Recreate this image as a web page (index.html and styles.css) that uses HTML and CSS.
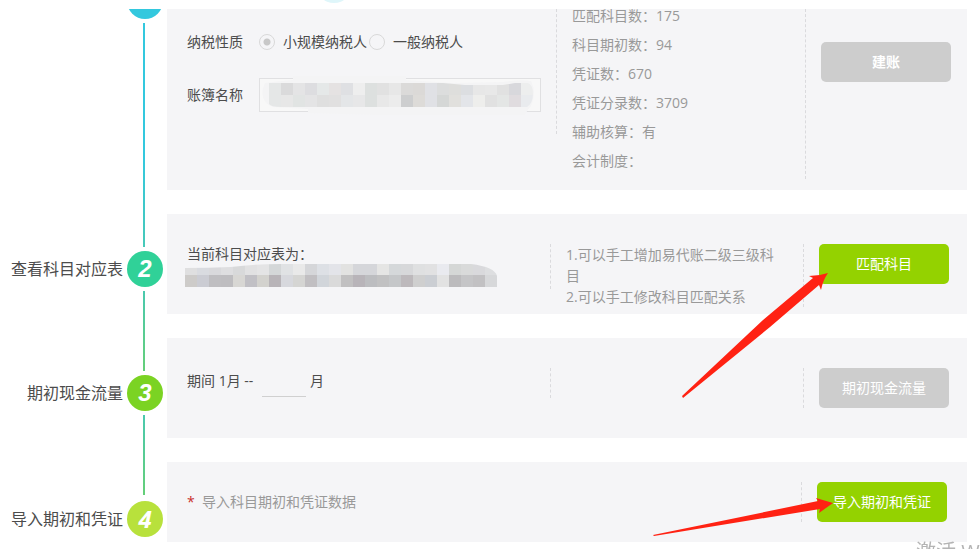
FILE: index.html
```
<!DOCTYPE html>
<html lang="zh-CN">
<head>
    <meta charset="UTF-8">
    <meta name="viewport" content="width=device-width, initial-scale=1.0">
    <title>导入期初和凭证</title>
    <link rel="stylesheet" href="styles.css">
</head>
<body>
    <header class="top-bar"><span class="top-dot"></span></header>

    <main class="wizard">
        <ol class="timeline">
            <li class="step step-1"><span class="badge"></span></li>
            <li class="line line-long"></li>
            <li class="step step-2">查看科目对应表<span class="badge">2</span></li>
            <li class="line"></li>
            <li class="step step-3">期初现金流量<span class="badge">3</span></li>
            <li class="line"></li>
            <li class="step step-4">导入期初和凭证<span class="badge">4</span></li>
        </ol>

        <div class="panels">
            <section class="panel panel-create">
                <form class="main">
                    <div class="form-row">
                        <span class="form-label">纳税性质</span>
                        <input type="radio" name="tax" id="tax-small" checked>
                        <label for="tax-small">小规模纳税人</label>
                        <input type="radio" name="tax" id="tax-normal">
                        <label for="tax-normal">一般纳税人</label>
                    </div>
                    <div class="form-row">
                        <label class="form-label" for="book-name">账簿名称</label>
                        <div class="book-field">
                            <input type="text" id="book-name">
                            <svg class="mask" width="282" height="40" viewBox="0 0 282 40">
                                <path d="M6 7Q20 5 34 4V0H147V4L192 7L244 6Q260 3 272 5Q278 16 272 30Q268 34 266 39L120 39L49 37V33L14 31Q1 26 4 12Z" fill="#f4f4f5"/>
                                <clipPath id="book-clip"><path d="M10 7H184L206 9H244L256 7H269Q274 9 274 18T268 31H22Q12 31 10 28Z"/></clipPath>
                                <g id="book-cells" clip-path="url(#book-clip)"></g>
                            </svg>
                        </div>
                    </div>
                </form>
                <div class="info">
                    <ul class="stats">
                        <li>匹配科目数：175</li>
                        <li>科目期初数：94</li>
                        <li>凭证数：670</li>
                        <li>凭证分录数：3709</li>
                        <li>辅助核算：有</li>
                        <li>会计制度：</li>
                    </ul>
                </div>
                <div class="action"><button type="button" class="btn btn-gray btn-bold">建账</button></div>
            </section>

            <section class="panel panel-match">
                <div class="main">
                    <div class="table-name">当前科目对应表为：
                        <svg class="mask" width="312" height="23" viewBox="0 0 312 23">
                            <clipPath id="table-clip"><path d="M0 4Q24 4 46 3Q70 0 96 0H286Q310 3 312 12V23H0Z"/></clipPath>
                            <g id="table-cells" clip-path="url(#table-clip)"></g>
                        </svg>
                    </div>
                </div>
                <div class="info">
                    <p>1.可以手工增加易代账二级三级科目</p>
                    <p>2.可以手工修改科目匹配关系</p>
                </div>
                <div class="action"><button type="button" class="btn btn-green">匹配科目</button></div>
                <svg class="arrow arrow-match" width="146" height="126" viewBox="0 0 146 126">
                    <path d="M0 123L81 47L131 5L127 3Q137 3 146 0Q141 7 139 17L137 12L88 54L1 125Z" fill="#ff2213"/>
                </svg>
            </section>

            <section class="panel panel-cash">
                <div class="main period">
                    <label for="month">期间 1月 --</label>
                    <input type="text" id="month">
                    <span>月</span>
                </div>
                <div class="info"></div>
                <div class="action"><button type="button" class="btn btn-gray">期初现金流量</button></div>
            </section>

            <section class="panel panel-import">
                <p class="note"><span class="star">*</span>导入科目期初和凭证数据</p>
                <div class="action"><button type="button" class="btn btn-green">导入期初和凭证</button></div>
                <svg class="arrow arrow-import" width="180" height="40" viewBox="0 0 180 40">
                    <path d="M0 37L165 3L163 0L180 5L166 15L167 11L1 38Z" fill="#ff2213"/>
                </svg>
            </section>
        </div>
    </main>

    <div class="watermark">激活 Windows</div>

    <script src="script.js"></script>
</body>
</html>
```
FILE: styles.css
```
* {
    box-sizing: border-box;
}
body {
    margin: 0;
    height: 100vh;
    overflow: hidden;
    background: #fff;
    color: #4c4c4c;
    font: 14px/20px "Open Sans", "Noto Sans CJK SC", sans-serif;
}
ol, ul, p {
    margin: 0;
    padding: 0;
    list-style: none;
}
input, button {
    font: inherit;
}
.top-bar {
    height: 9px;
    overflow: hidden;
}
.top-dot {
    display: block;
    width: 36px;
    height: 36px;
    margin: -33px 0 0 316px;
    border-radius: 50%;
    background: #dff6fa;
}
.wizard {
    display: flex;
    gap: 4px;
    padding-right: 13px;
}

/* timeline */
.timeline {
    width: 163px;
    flex: none;
}
.step {
    display: flex;
    align-items: center;
    justify-content: flex-end;
    gap: 4px;
    height: 36px;
    font-size: 16px;
}
.step-1 {
    height: 10px;
    align-items: flex-end;
    overflow: hidden;
}
.badge {
    flex: none;
    width: 36px;
    height: 36px;
    border-radius: 50%;
    color: #fff;
    font: italic bold 24px/36px "Liberation Sans", Arial, sans-serif;
    text-align: center;
}
.step-1 .badge { background: #33c8de; }
.step-2 .badge { background: #30d198; }
.step-3 .badge { background: #7bd323; }
.step-4 .badge {
    background: #b8e13c;
    font-family: "Open Sans", sans-serif;
}
.line {
    width: 2px;
    height: 80px;
    margin: 4px 18px 4px auto;
    background: linear-gradient(#4ac9ae, #65cf78);
}
.line-long {
    height: 224px;
    background: linear-gradient(#33c8de 60%, #47c9b8);
}
.line:nth-last-child(2) {
    margin-bottom: 6px;
}

/* panels */
.panels {
    flex: 1;
    display: flex;
    flex-direction: column;
    gap: 24px;
}
.panel {
    position: relative;
    display: flex;
    align-items: flex-start;
    min-height: 100px;
    padding: 30px 18px 0 20px;
    background: #f5f5f7;
}
.main {
    flex: 1;
    min-height: 30px;
    border-right: 1px dashed #dadadd;
}
.info {
    width: 253px;
    min-height: 40px;
    padding: 0 20px 0 15px;
    border-right: 1px dashed #dadadd;
    color: #999;
    line-height: 21px;
}
.action {
    padding-left: 15px;
}
.btn {
    display: block;
    width: 130px;
    height: 40px;
    padding: 0;
    border: none;
    border-radius: 5px;
    color: #fff;
    cursor: pointer;
}
.btn-green { background: #94d200; }
.btn-gray { background: #cdcdcd; }
.btn-bold { font-weight: bold; }

/* create account book */
.panel-create {
    min-height: 181px;
    padding: 0 16px 0 20px;
    overflow: hidden;
}
.panel-create .main {
    padding: 17px 0 22px;
}
.panel-create .info {
    width: 249px;
    height: 170px;
}
.panel-create .action {
    padding-top: 33px;
}
.stats {
    margin-top: -8px;
    line-height: 29px;
}
.form-row {
    display: flex;
    align-items: center;
    height: 32px;
}
.form-row + .form-row {
    height: 34px;
    margin-top: 20px;
}
.form-label {
    width: 72px;
}
input[type="radio"] {
    appearance: none;
    width: 16px;
    height: 16px;
    margin: 0 8px 0 0;
    border: 1px solid #d9d9d9;
    border-radius: 50%;
}
input[type="radio"]:checked {
    background: radial-gradient(circle, #c8c8c8 3px, transparent 4px);
}
label + input[type="radio"] {
    margin-left: 2px;
}
.book-field {
    position: relative;
}
#book-name {
    display: block;
    width: 282px;
    height: 34px;
    border: 1px solid #e0e0e2;
    background: #f8f8f8;
}
.mask {
    position: absolute;
    left: 0;
    top: -2px;
}

/* subject table */
.panel-match .main {
    height: 45px;
}
.table-name {
    position: relative;
}
.table-name .mask {
    left: -2px;
    top: 20px;
}

/* cash flow period */
.period {
    display: flex;
    gap: 4px;
    line-height: 26px;
}
.period label {
    width: 71px;
}
#month {
    width: 44px;
    height: 29px;
    padding: 0;
    border: none;
    border-bottom: 1px solid #d0d0d0;
    background: none;
}

/* import */
.panel-import {
    min-height: 80px;
    padding: 20px;
}
.note {
    flex: 1;
    border-right: 1px dashed #dadadd;
    color: #999;
    line-height: 40px;
}
.star {
    display: inline-block;
    width: 15px;
    color: #c9302c;
}

.arrow {
    position: absolute;
    z-index: 1;
}
.arrow-match {
    right: 139px;
    top: 59px;
}
.arrow-import {
    right: 134px;
    top: 36px;
}
.watermark {
    position: fixed;
    left: calc(100% - 64px);
    bottom: -17px;
    color: #b4b4b4;
    font-size: 20px;
    line-height: 28px;
    white-space: nowrap;
}
```
FILE: script.js
```
const bookRows = [
    ["#e5e7e7", "#dadadb", "#e4e4e5", "#dddde0", "#e5e8e8", "#e5e2e2", "#dfe0e3", "#eeeeee", "#dde0df", "#e1e1e1", "#e7e7e7", "#dbdad9", "#dbd9d7", "#e0e1e5", "#dcdddd", "#dededc", "#dcdee1", "#e7e7e7", "#e8e8e8", "#e1e1e1", "#d8d8dc", "#edeeee"],
    ["#e5e7e7", "#e7e7e7", "#e1e4e3", "#e4e4e5", "#dfdfdf", "#e1e0e0", "#e4e6e8", "#e7e7e8", "#dde0df", "#e8e8e8", "#ececec", "#cdcecf", "#dddbd8", "#e0e1e5", "#d5d7d6", "#e1e0dd", "#e3e5e9", "#eeeeec", "#e1e1e1", "#e4e6e5", "#e0dcdf", "#e9ebee"]
];
const tableRows = [
    ["#dfdfe0", "#d9dbe0", "#d9d9dc", "#dedee0", "#d8d9da", "#e1e1e2", "#e4e4e5", "#d4d7d8", "#e0e2e4", "#e9e9e9", "#d5d6d9", "#dde0e5", "#e3e4e9", "#e2e2e1", "#d5d6da", "#d5d6da", "#e5e5e4", "#d5d8da", "#d7d8da", "#dfe0e1", "#e1e1e2", "#e9eaef", "#d5d7d6", "#d9dada", "#d9d9dc", "#dddee0"],
    ["#cdcbc9", "#cbccd3", "#bfbec1", "#bebdc0", "#d8d7d4", "#c1c0c5", "#d3d2ce", "#b8b4b8", "#d7d8dd", "#d5d5d3", "#c1bfc2", "#d1d5da", "#dadada", "#c1c0c1", "#b8b4b9", "#bcbdc0", "#c1c1c2", "#c5c7c9", "#bdb9bc", "#cfcfcf", "#cbced3", "#e2e2e2", "#bcbbbd", "#c5c5c7", "#c2c1c3", "#d7d8da"]
];

// each row of colours becomes a strip of 12px blocks
function drawCells(id, rows, x, y, heights) {
    const group = document.getElementById(id);
    rows.forEach((row, r) => {
        row.forEach((color, i) => {
            const rect = document.createElementNS("http://www.w3.org/2000/svg", "rect");
            rect.setAttribute("x", x + i * 12);
            rect.setAttribute("y", y);
            rect.setAttribute("width", 12);
            rect.setAttribute("height", heights[r]);
            rect.setAttribute("fill", color);
            group.appendChild(rect);
        });
        y += heights[r];
    });
}

drawCells("book-cells", bookRows, 10, 7, [12, 12]);
drawCells("table-cells", tableRows, 0, 0, [11, 12]);
```
